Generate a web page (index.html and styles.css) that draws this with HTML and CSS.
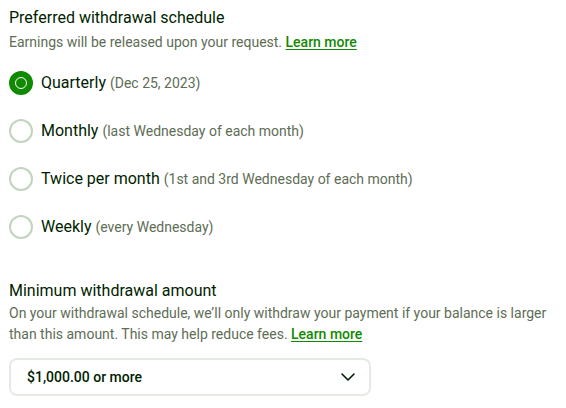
FILE: index.html
```html
<!DOCTYPE html>
<html>
<head>
<meta charset="utf-8">
<link rel="stylesheet" href="styles.css">
</head>
<body>
<div class="page">
  <section class="section">
    <h2 class="title">Preferred withdrawal schedule</h2>
    <p class="desc">Earnings will be released upon your request. <a class="link" href="#">Learn more</a></p>
    <div class="radios">
      <label class="radio-row">
        <span class="radio checked"><span class="dot"></span></span>
        <span class="label">Quarterly <span class="hint">(Dec 25, 2023)</span></span>
      </label>
      <label class="radio-row">
        <span class="radio"></span>
        <span class="label">Monthly <span class="hint">(last Wednesday of each month)</span></span>
      </label>
      <label class="radio-row">
        <span class="radio"></span>
        <span class="label">Twice per month <span class="hint">(1st and 3rd Wednesday of each month)</span></span>
      </label>
      <label class="radio-row">
        <span class="radio"></span>
        <span class="label">Weekly <span class="hint">(every Wednesday)</span></span>
      </label>
    </div>
  </section>
  <section class="section second">
    <h2 class="title">Minimum withdrawal amount</h2>
    <p class="desc para">On your withdrawal schedule, we’ll only withdraw your payment if your balance is larger than this amount. This may help reduce fees. <a class="link" href="#">Learn more</a></p>
    <div class="select">
      <span class="select-value">$1,000.00 or more</span>
      <svg class="chev" width="14" height="8" viewBox="0 0 14 8"><path d="M1 1l6 6 6-6" fill="none" stroke="#001e00" stroke-width="1.6" stroke-linecap="round" stroke-linejoin="round"/></svg>
    </div>
  </section>
</div>
</body>
</html>
```
FILE: styles.css
```css
* { box-sizing: border-box; }
html, body { margin: 0; padding: 0; background: #fff; }
body { font-family: Roboto, "Liberation Sans", sans-serif; color: #001e00; }
.page { padding: 6px 9px 0 9px; width: 566px; }
.section { display: flex; flex-direction: column; }
.title { margin: 0; font-size: 16px; line-height: 24px; font-weight: 400; color: #001e00; }
.desc { margin: 2px 0 0; font-size: 14px; line-height: 20px; color: #5e6d55; }
.link { color: #108a00; font-weight: 500; text-decoration: underline; text-underline-offset: 2px; }
.radios { margin-top: 7px; display: flex; flex-direction: column; }
.radio-row { height: 48px; display: flex; align-items: center; gap: 8px; }
.radio { width: 24px; height: 24px; border-radius: 50%; border: 2px solid #c3d3c0; display: flex; align-items: center; justify-content: center; flex: none; }
.radio.checked { background: #108a00; border-color: #108a00; }
.dot { width: 12px; height: 12px; border-radius: 50%; border: 1.5px solid #fff; }
.label { font-size: 16px; line-height: 24px; color: #001e00; }
.hint { font-size: 14px; color: #5e6d55; }
.second { margin-top: 28px; }
.para { margin-top: 0; line-height: 21px; width: 548px; }
.select { margin-top: 13px; width: 362px; height: 38px; border: 2px solid #e4ebe4; border-radius: 8px; display: flex; align-items: center; justify-content: space-between; padding: 0 14px 0 16px; }
.select-value { font-size: 14px; font-weight: 500; color: #001e00; }
.chev { display: block; }
```
